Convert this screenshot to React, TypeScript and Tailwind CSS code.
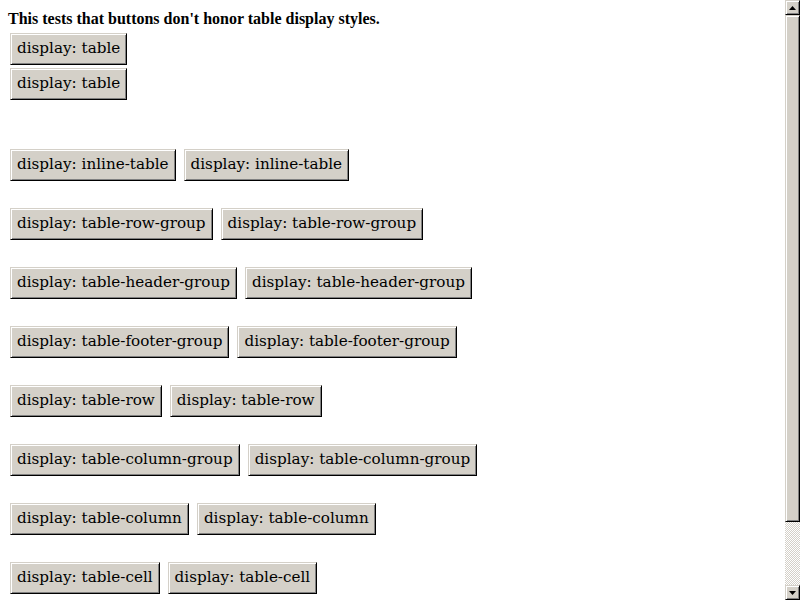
import React from 'react';

const Btn: React.FC<{ label: string }> = ({ label }) => (
  <button
    className="bg-[#d4d0c8] text-black text-[15.2px] leading-[19px] px-[6px] pt-[5px] pb-[6px] border border-t-[#d4d0c8] border-l-[#d4d0c8] border-r-black border-b-black shadow-[inset_1px_1px_0_#ffffff,inset_-1px_-1px_0_#808080] whitespace-nowrap"
    style={{ fontFamily: '"DejaVu Serif", serif' }}
  >
    {label}
  </button>
);

const pairs = [
  'inline-table',
  'table-row-group',
  'table-header-group',
  'table-footer-group',
  'table-row',
  'table-column-group',
  'table-column',
  'table-cell',
];

export default function App() {
  return (
    <div className="flex w-[800px] h-[600px] overflow-hidden bg-white">
      <div className="flex-1 px-2 pt-[10px]">
        <p
          className="text-[16px] font-bold leading-[18px] text-black"
          style={{ fontFamily: '"Liberation Serif", serif' }}
        >
          This tests that buttons don't honor table display styles.
        </p>
        <div className="flex flex-col items-start gap-[3px] mt-[5px] pl-[2px]">
          <Btn label="display: table" />
          <Btn label="display: table" />
        </div>
        <div className="flex flex-col gap-[27px] mt-[49px] pl-[2px]">
          {pairs.map((p) => (
            <div key={p} className="flex gap-[8px]">
              <Btn label={`display: ${p}`} />
              <Btn label={`display: ${p}`} />
            </div>
          ))}
        </div>
      </div>
      <div className="w-[15px] h-full flex flex-col bg-[#d4d0c8]">
        <div className="h-[15px] flex items-center justify-center border border-t-[#d4d0c8] border-l-[#d4d0c8] border-r-black border-b-black shadow-[inset_1px_1px_0_#ffffff,inset_-1px_-1px_0_#808080]">
          <svg width="7" height="4" viewBox="0 0 7 4"><path d="M3.5 0 L7 4 L0 4 Z" fill="#000" /></svg>
        </div>
        <div className="h-[507px] border border-t-[#d4d0c8] border-l-[#d4d0c8] border-r-black border-b-black shadow-[inset_1px_1px_0_#ffffff,inset_-1px_-1px_0_#808080]" />
        <div
          className="flex-1"
          style={{
            backgroundImage:
              'repeating-conic-gradient(#ffffff 0% 25%, #d4d0c8 0% 50%)',
            backgroundSize: '2px 2px',
          }}
        />
        <div className="h-[15px] flex items-center justify-center border border-t-[#d4d0c8] border-l-[#d4d0c8] border-r-black border-b-black shadow-[inset_1px_1px_0_#ffffff,inset_-1px_-1px_0_#808080]">
          <svg width="7" height="4" viewBox="0 0 7 4"><path d="M0 0 L7 0 L3.5 4 Z" fill="#000" /></svg>
        </div>
      </div>
    </div>
  );
}
